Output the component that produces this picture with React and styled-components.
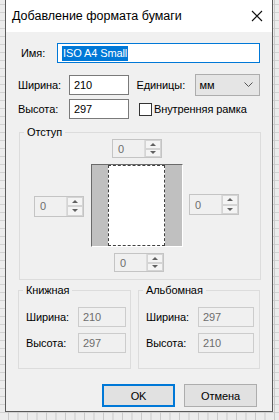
import styled, { createGlobalStyle } from "styled-components";

const GlobalStyle = createGlobalStyle`
  html, body {
    margin: 0;
    padding: 0;
  }
  body {
    width: 279px;
    height: 420px;
    overflow: hidden;
    font-family: "Liberation Sans", Arial, sans-serif;
    font-size: 11px;
    letter-spacing: -0.1px;
    color: #000;
    background-color: #ececec;
    background-image:
      linear-gradient(to right, #c9c9c9 1px, transparent 1px),
      linear-gradient(to bottom, #d2d2d2 1px, transparent 1px);
    background-size: 9.5px 8px;
    background-position: 8px 4px;
  }
`;

const Dialog = styled.div`
  margin-left: 5px;
  width: 268px;
  height: 412px;
  box-sizing: border-box;
  border: 1px solid #5a5a5a;
  border-top: none;
  background: #f0f0f0;
  display: flex;
  flex-direction: column;
`;

const TitleBar = styled.div`
  height: 32px;
  background: #fff;
  display: flex;
  align-items: center;
  justify-content: space-between;
  padding: 0 9px 0 6px;
  font-size: 12.5px;
  letter-spacing: 0;
`;

const Body = styled.div`
  padding: 11px 12px 0 12px;
  display: flex;
  flex-direction: column;
`;

const Row = styled.div`
  display: flex;
  align-items: center;
  height: ${(p) => p.$h || 24}px;
  white-space: nowrap;
`;

const Label = styled.span`
  width: ${(p) => p.$w}px;
  padding-left: ${(p) => p.$pl || 0}px;
  flex-shrink: 0;
  white-space: nowrap;
`;

const TextBox = styled.div`
  box-sizing: border-box;
  width: ${(p) => p.$w}px;
  height: 20px;
  border: 1px solid ${(p) => (p.$focus ? "#0078d7" : p.$disabled ? "#cccccc" : "#7a7a7a")};
  background: ${(p) => (p.$disabled ? "#f0f0f0" : "#fff")};
  color: ${(p) => (p.$disabled ? "#6d6d6d" : "#000")};
  display: flex;
  align-items: center;
  padding-left: 4px;
`;

const Selected = styled.span`
  background: #0078d7;
  color: #fff;
  padding: 0 1px;
  line-height: 15px;
`;

const Select = styled.div`
  box-sizing: border-box;
  width: 66px;
  height: 22px;
  border: 1px solid #adadad;
  background: #e5e5e5;
  display: flex;
  align-items: center;
  justify-content: space-between;
  padding: 0 6px 0 4px;
`;

const CheckBox = styled.span`
  box-sizing: border-box;
  width: 13px;
  height: 13px;
  border: 1px solid #333;
  background: #fff;
  margin: 0 2px 0 10px;
`;

const Group = styled.fieldset`
  margin: 0;
  box-sizing: border-box;
  border: 1px solid #dcdcdc;
  padding: 0;
  min-width: 0;
  width: ${(p) => p.$w}px;
  height: ${(p) => p.$h}px;
  legend {
    margin-left: 4px;
    padding: 0 3px;
    line-height: 14px;
  }
`;

const MarginLayout = styled.div`
  display: grid;
  grid-template-columns: 71px 92px 1fr;
  grid-template-rows: 25px 83px 1fr;
`;

const Cell = styled.div`
  display: flex;
  justify-content: ${(p) => p.$jc || "flex-start"};
  align-items: ${(p) => p.$ai || "center"};
  padding: ${(p) => p.$pad || "0"};
`;

const Spin = styled.div`
  box-sizing: border-box;
  width: 50px;
  height: ${(p) => p.$h || 19}px;
  border: 1px solid #c4c4c4;
  background: #f0f0f0;
  display: flex;
`;

const SpinValue = styled.span`
  flex: 1;
  color: #6d6d6d;
  padding-left: 5px;
  display: flex;
  align-items: center;
`;

const SpinButtons = styled.div`
  width: 16px;
  display: flex;
  flex-direction: column;
  border-left: 1px solid #dcdcdc;
`;

const SpinBtn = styled.div`
  flex: 1;
  display: flex;
  align-items: center;
  justify-content: center;
  border: 1px solid #d4d4d4;
  background: #f4f4f4;
  &::after {
    content: "";
    border-left: 3px solid transparent;
    border-right: 3px solid transparent;
    ${(p) => (p.$down ? "border-top" : "border-bottom")}: 3px solid #606060;
  }
`;

const Page = styled.div`
  width: 92px;
  height: 83px;
  box-sizing: border-box;
  border-top: 1px solid #6a6a6a;
  border-left: 1px solid #6a6a6a;
  border-right: 1px solid #fff;
  border-bottom: 1px solid #fff;
  background: #c0c0c0;
  display: flex;
  justify-content: center;
`;

const PageInner = styled.div`
  width: 57px;
  margin-left: -1px;
  box-sizing: border-box;
  border: 1px dashed #404040;
  background: #fff;
`;

const BottomGroups = styled.div`
  display: flex;
  gap: 7px;
  margin-top: 3px;
`;

const GroupBody = styled.div`
  padding: 10px 0 0 7px;
  display: flex;
  flex-direction: column;
  gap: 6px;
`;

const Footer = styled.div`
  display: flex;
  justify-content: flex-end;
  gap: 9px;
  padding: 15px 3px 0 0;
`;

const Button = styled.div`
  box-sizing: border-box;
  width: 73px;
  height: 23px;
  border: ${(p) => (p.$default ? "2px solid #0078d7" : "1px solid #adadad")};
  background: #e1e1e1;
  display: flex;
  align-items: center;
  justify-content: center;
`;

function Spinner({ h }) {
  return (
    <Spin $h={h}>
      <SpinValue>0</SpinValue>
      <SpinButtons>
        <SpinBtn />
        <SpinBtn $down />
      </SpinButtons>
    </Spin>
  );
}

function SizeGroup({ title, w, boxW, width, height }) {
  return (
    <Group $w={w} $h={86}>
      <legend>{title}</legend>
      <GroupBody>
        <Row $h={20}>
          <Label $w={52}>Ширина:</Label>
          <TextBox $w={boxW} $disabled>{width}</TextBox>
        </Row>
        <Row $h={20}>
          <Label $w={52}>Высота:</Label>
          <TextBox $w={boxW} $disabled>{height}</TextBox>
        </Row>
      </GroupBody>
    </Group>
  );
}

export default function App() {
  return (
    <>
      <GlobalStyle />
      <Dialog>
        <TitleBar>
          <span>Добавление формата бумаги</span>
          <svg width="12" height="12" viewBox="0 0 12 12">
            <path d="M1 1L11 11M11 1L1 11" stroke="#111" strokeWidth="1.1" fill="none" />
          </svg>
        </TitleBar>
        <Body>
          <Row $h={20}>
            <Label $w={36} $pl={3}>Имя:</Label>
            <TextBox $w={205} $focus>
              <Selected>ISO A4 Small</Selected>
            </TextBox>
          </Row>
          <Row $h={21} style={{ marginTop: 11 }}>
            <Label $w={51}>Ширина:</Label>
            <TextBox $w={60}>210</TextBox>
            <Label $w={58} $pl={8}>Единицы:</Label>
            <Select>
              <span>мм</span>
              <svg width="9" height="5" viewBox="0 0 9 5">
                <path d="M0.5 0.5L4.5 4.5L8.5 0.5" stroke="#555" fill="none" />
              </svg>
            </Select>
          </Row>
          <Row $h={20} style={{ marginTop: 4 }}>
            <Label $w={51}>Высота:</Label>
            <TextBox $w={60}>297</TextBox>
            <CheckBox />
            <span>Внутренняя рамка</span>
          </Row>
          <Group $w={242} $h={155} style={{ marginTop: 6, marginLeft: 1 }}>
            <legend>Отступ</legend>
            <MarginLayout>
              <div />
              <Cell $ai="flex-start" $pad="0 0 0 21px">
                <Spinner h={19} />
              </Cell>
              <div />
              <Cell $jc="flex-end" $pad="1px 7px 0 0">
                <Spinner h={21} />
              </Cell>
              <Page>
                <PageInner />
              </Page>
              <Cell $pad="0 0 2px 6px">
                <Spinner h={21} />
              </Cell>
              <div />
              <Cell $ai="flex-start" $pad="6px 0 0 23px">
                <Spinner h={19} />
              </Cell>
              <div />
            </MarginLayout>
          </Group>
          <BottomGroups>
            <SizeGroup title="Книжная" w={114} boxW={48} width="210" height="297" />
            <SizeGroup title="Альбомная" w={123} boxW={56} width="297" height="210" />
          </BottomGroups>
          <Footer>
            <Button $default>OK</Button>
            <Button>Отмена</Button>
          </Footer>
        </Body>
      </Dialog>
    </>
  );
}
